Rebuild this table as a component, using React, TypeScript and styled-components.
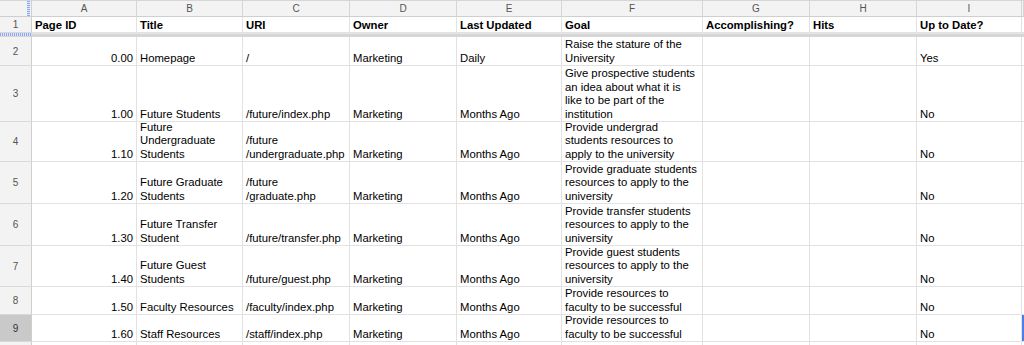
import React from 'react'
import styled, { createGlobalStyle, css } from 'styled-components'

const GlobalStyle = createGlobalStyle`
  html, body {
    margin: 0;
    padding: 0;
    background: #ffffff;
  }
  body {
    font-family: "Liberation Sans", Arial, sans-serif;
    overflow: hidden;
  }
`

const COLS = ['A', 'B', 'C', 'D', 'E', 'F', 'G', 'H', 'I']
const ROW_HEIGHTS = [29, 56, 40, 42, 42, 41, 28, 27, 24]

const Sheet = styled.div`
  display: grid;
  grid-template-columns: 32px 105px 106px 107px 107px 105px 141px 107px 107px 105px 1fr;
  grid-template-rows: 17px 16px 4px ${ROW_HEIGHTS.map(h => h + 'px').join(' ')};
  width: 1024px;
  height: 345px;
  overflow: hidden;
  font-size: 11.3px;
  color: #111;
`

const headBase = css`
  background: #f3f3f3;
  display: flex;
  align-items: center;
  justify-content: center;
  box-sizing: border-box;
  color: #555;
  font-size: 10px;
`

const Corner = styled.div`
  ${headBase};
  position: relative;
  border-right: 1px solid #cfcfcf;
  border-bottom: 1px solid #cfcfcf;
  border-top: 1px solid #d6d6d6;
`

const VHandle = styled.span`
  position: absolute;
  right: 1px;
  top: 0;
  bottom: 0;
  width: 3px;
  background: repeating-linear-gradient(to bottom, #8fa9f0 0 1px, #dfe6fb 1px 2px);
`

const ColHead = styled.div`
  ${headBase};
  border-right: 1px solid #d6d6d6;
  border-bottom: 1px solid #cfcfcf;
  border-top: 1px solid #d6d6d6;
`

const RowHead = styled.div<{ $selected?: boolean }>`
  ${headBase};
  position: relative;
  border-right: 1px solid #cfcfcf;
  border-bottom: 1px solid #d9d9d9;
  background: ${p => (p.$selected ? '#c9c9c9' : '#f3f3f3')};
  color: ${p => (p.$selected ? '#333' : '#555')};
`

const FreezeBar = styled.div`
  grid-column: 1 / -1;
  background: #d6d6d6;
  border-top: 1px solid #e4e4e4;
  box-sizing: border-box;
  position: relative;
`

const HHandle = styled.span`
  position: absolute;
  left: 0;
  top: -1px;
  width: 31px;
  height: 3px;
  background: repeating-linear-gradient(to right, #8fa9f0 0 1px, #dfe6fb 1px 2px);
`

const Cell = styled.div<{ $align?: 'left' | 'right'; $bold?: boolean }>`
  box-sizing: border-box;
  border-right: 1px solid #e2e2e2;
  border-bottom: 1px solid #e2e2e2;
  display: flex;
  flex-direction: column;
  justify-content: flex-end;
  padding: 0 3px 0 3px;
  line-height: 13.5px;
  white-space: pre;
  overflow: hidden;
  text-align: ${p => p.$align || 'left'};
  font-weight: ${p => (p.$bold ? 700 : 400)};
  color: #000;
`

const Tail = styled.div<{ $active?: boolean }>`
  border-bottom: 1px solid #e2e2e2;
  box-sizing: border-box;
  background: ${p => (p.$active ? '#4d7ee8' : '#ffffff')};
`

const headers = ['Page ID', 'Title', 'URI', 'Owner', 'Last Updated', 'Goal', 'Accomplishing?', 'Hits', 'Up to Date?']

const rows: string[][] = [
  ['0.00', 'Homepage', '/', 'Marketing', 'Daily', 'Raise the stature of the\nUniversity', '', '', 'Yes'],
  ['1.00', 'Future Students', '/future/index.php', 'Marketing', 'Months Ago', 'Give prospective students\nan idea about what it is\nlike to be part of the\ninstitution', '', '', 'No'],
  ['1.10', 'Future\nUndergraduate\nStudents', '/future\n/undergraduate.php', 'Marketing', 'Months Ago', 'Provide undergrad\nstudents resources to\napply to the university', '', '', 'No'],
  ['1.20', 'Future Graduate\nStudents', '/future\n/graduate.php', 'Marketing', 'Months Ago', 'Provide graduate students\nresources to apply to the\nuniversity', '', '', 'No'],
  ['1.30', 'Future Transfer\nStudent', '/future/transfer.php', 'Marketing', 'Months Ago', 'Provide transfer students\nresources to apply to the\nuniversity', '', '', 'No'],
  ['1.40', 'Future Guest\nStudents', '/future/guest.php', 'Marketing', 'Months Ago', 'Provide guest students\nresources to apply to the\nuniversity', '', '', 'No'],
  ['1.50', 'Faculty Resources', '/faculty/index.php', 'Marketing', 'Months Ago', 'Provide resources to\nfaculty to be successful', '', '', 'No'],
  ['1.60', 'Staff Resources', '/staff/index.php', 'Marketing', 'Months Ago', 'Provide resources to\nfaculty to be successful', '', '', 'No'],
  ['', '', '', '', '', '', '', '', ''],
]

export default function App() {
  return (
    <>
      <GlobalStyle />
      <Sheet>
        <Corner><VHandle /></Corner>
        {COLS.map(c => <ColHead key={c}>{c}</ColHead>)}
        <ColHead />

        <RowHead>1</RowHead>
        {headers.map(h => <Cell key={h} $bold>{h}</Cell>)}
        <Tail />

        <FreezeBar><HHandle /></FreezeBar>

        {rows.map((r, i) => (
          <React.Fragment key={i}>
            {/* the last row is only a sliver at the bottom edge, its number is not visible */}
            <RowHead $selected={i === 7}>{i < rows.length - 1 ? i + 2 : ''}</RowHead>
            {r.map((v, j) => (
              <Cell key={j} $align={j === 0 ? 'right' : 'left'}>{v}</Cell>
            ))}
            <Tail $active={i === 7} />
          </React.Fragment>
        ))}
      </Sheet>
    </>
  )
}
